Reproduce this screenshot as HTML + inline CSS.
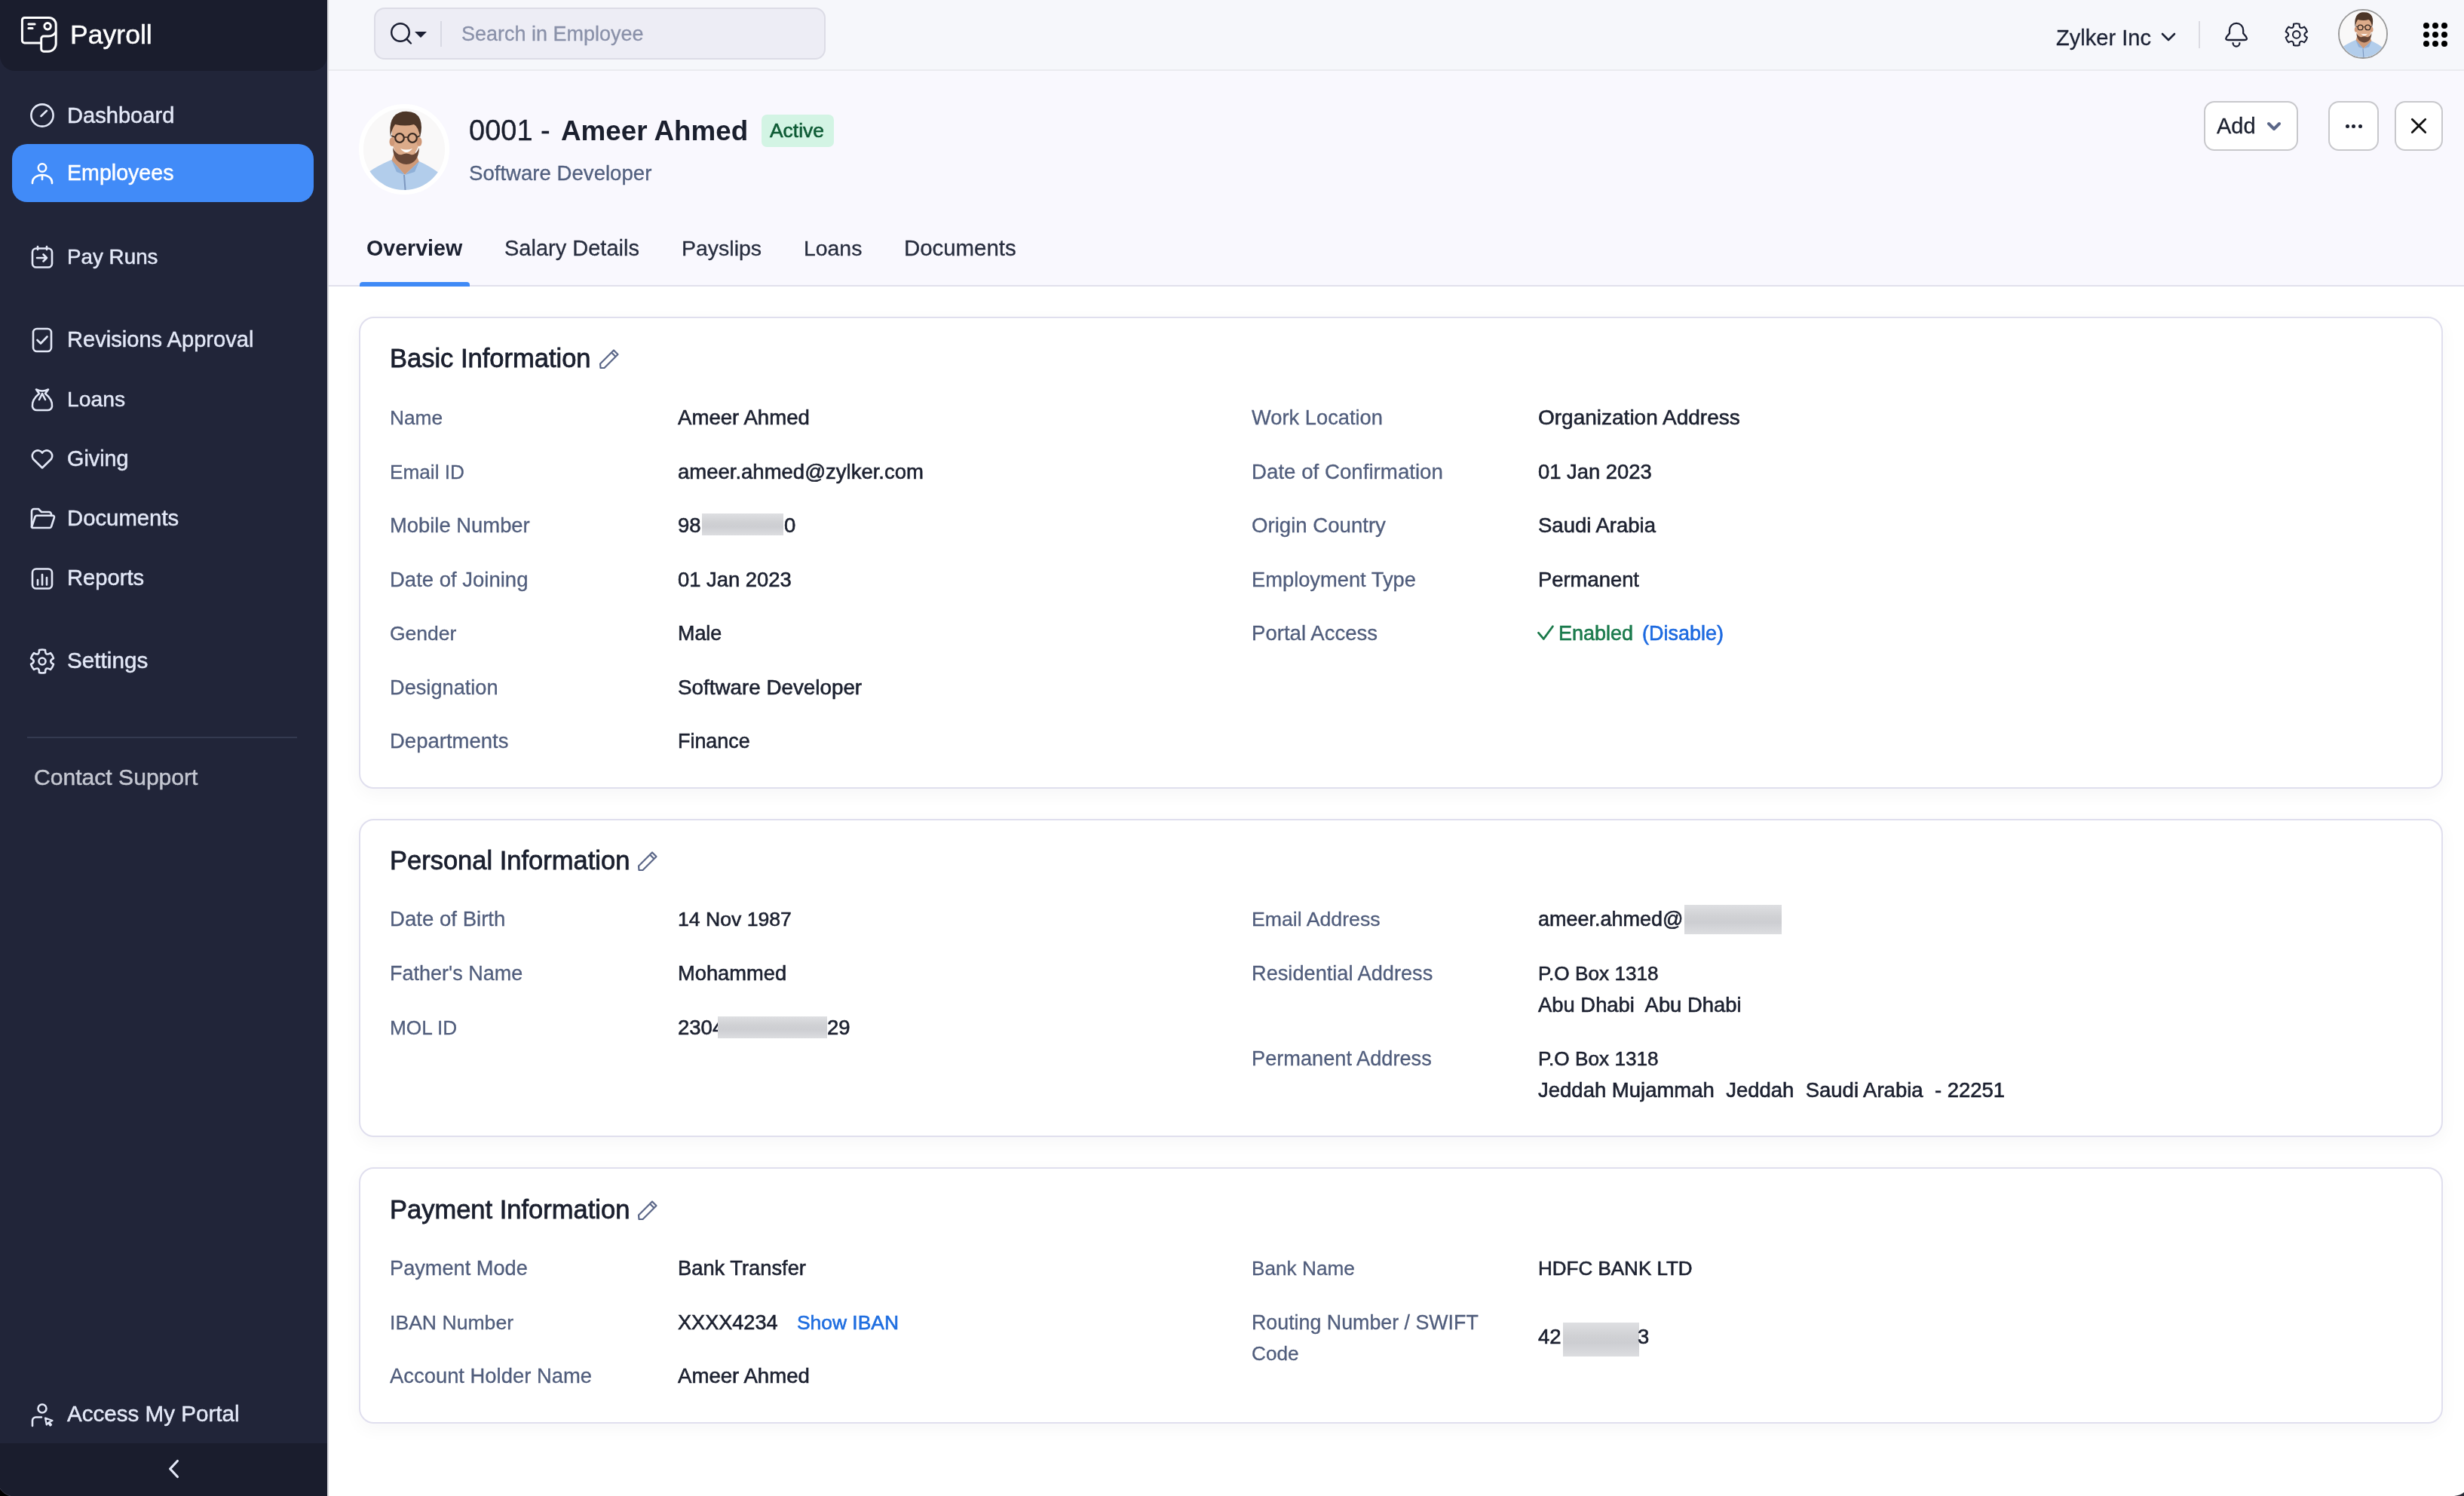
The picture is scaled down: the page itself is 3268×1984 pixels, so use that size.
<!DOCTYPE html>
<html><head><meta charset="utf-8"><title>Payroll - Employee</title>
<style>
html,body{margin:0;padding:0;width:3268px;height:1984px;overflow:hidden;background:#fff;font-family:"Liberation Sans",sans-serif}
.t{position:absolute;white-space:nowrap;line-height:1;will-change:transform}
svg{overflow:visible}
</style></head><body>
<div style="position:absolute;left:0px;top:0px;width:434px;height:1984px;background:#212539"></div>
<div style="position:absolute;left:0px;top:0px;width:434px;height:94px;background:#1a1d2d;border-radius:0 0 20px 20px"></div>
<div style="position:absolute;left:434px;top:0px;width:2px;height:1984px;background:#d9d9de"></div>
<svg style="position:absolute;left:24px;top:18px" width="56" height="56" viewBox="0 0 56 56" fill="none" stroke="#fff" stroke-width="3" stroke-linecap="round" stroke-linejoin="round">
<path d="M30.7 39 H8.6 a3.2 3.2 0 0 1 -3.2 -3.2 V8.6 a3.2 3.2 0 0 1 3.2 -3.2 H41 a9.2 9.2 0 0 1 9.2 9.2 V40 a10.2 10.2 0 0 1 -10.2 10.2 H33.9 a3.2 3.2 0 0 1 -3.2 -3.2 V33.2 a3.2 3.2 0 0 1 3.2 -3.2 H40 a10.2 8 0 0 0 10.2 -6.5"/>
<circle cx="39.1" cy="16.7" r="4.2"/>
<path d="M13.9 13.9 H22.1 M13.9 19.5 H19.1"/>
</svg>
<div class="t" style="left:93px;top:29px;font-size:35.6px;color:#ffffff;font-weight:400;-webkit-text-stroke:0.45px currentColor">Payroll</div>
<div style="position:absolute;left:16px;top:191px;width:400px;height:77px;background:#418bf8;border-radius:20px"></div>
<div class="t" style="left:89px;top:139px;font-size:29.1px;color:#e3e8f7;font-weight:400;-webkit-text-stroke:0.45px currentColor">Dashboard</div>
<div class="t" style="left:89px;top:215px;font-size:28.6px;color:#ffffff;font-weight:400;-webkit-text-stroke:0.45px currentColor">Employees</div>
<div class="t" style="left:89px;top:327px;font-size:27.8px;color:#e3e8f7;font-weight:400;-webkit-text-stroke:0.45px currentColor">Pay Runs</div>
<div class="t" style="left:89px;top:436px;font-size:29.1px;color:#e3e8f7;font-weight:400;-webkit-text-stroke:0.45px currentColor">Revisions Approval</div>
<div class="t" style="left:89px;top:515px;font-size:28.3px;color:#e3e8f7;font-weight:400;-webkit-text-stroke:0.45px currentColor">Loans</div>
<div class="t" style="left:89px;top:594px;font-size:28.8px;color:#e3e8f7;font-weight:400;-webkit-text-stroke:0.45px currentColor">Giving</div>
<div class="t" style="left:89px;top:672px;font-size:29.3px;color:#e3e8f7;font-weight:400;-webkit-text-stroke:0.45px currentColor">Documents</div>
<div class="t" style="left:89px;top:752px;font-size:29.2px;color:#e3e8f7;font-weight:400;-webkit-text-stroke:0.45px currentColor">Reports</div>
<div class="t" style="left:89px;top:861px;font-size:29.7px;color:#e3e8f7;font-weight:400;-webkit-text-stroke:0.45px currentColor">Settings</div>
<svg style="position:absolute;left:38px;top:135px" width="36" height="36" viewBox="0 0 36 36" fill="none" stroke="#e3e8f7" stroke-width="2.6" stroke-linecap="round" stroke-linejoin="round"><circle cx="18" cy="18" r="14.6"/><path d="M16.5 19 L24 11.8"/></svg>
<svg style="position:absolute;left:38px;top:212px" width="36" height="36" viewBox="0 0 36 36" fill="none" stroke="#ffffff" stroke-width="2.6" stroke-linecap="round" stroke-linejoin="round"><circle cx="18" cy="10.5" r="5.2"/><path d="M5 31 V29.5 a13 9.5 0 0 1 26 0 V31"/><path d="M18 20.5 V26"/></svg>
<svg style="position:absolute;left:38px;top:323px" width="36" height="36" viewBox="0 0 36 36" fill="none" stroke="#e3e8f7" stroke-width="2.6" stroke-linecap="round" stroke-linejoin="round"><rect x="5" y="6.5" width="26" height="25" rx="5"/><path d="M12 4 V8 M24 4 V8"/><path d="M11 19 H24 M19.5 14.5 L24 19 L19.5 23.5"/></svg>
<svg style="position:absolute;left:38px;top:433px" width="36" height="36" viewBox="0 0 36 36" fill="none" stroke="#e3e8f7" stroke-width="2.6" stroke-linecap="round" stroke-linejoin="round"><rect x="6" y="3" width="24" height="30" rx="5"/><path d="M11.5 18 L16 22.5 L24.5 13.5"/></svg>
<svg style="position:absolute;left:38px;top:510.5px" width="36" height="36" viewBox="0 0 36 36" fill="none" stroke="#e3e8f7" stroke-width="2.6" stroke-linecap="round" stroke-linejoin="round"><path d="M10 5.5 Q18 9.5 26 5.5 L22 11 Q32 19 31 28 Q30 33 25 33 H11 Q6 33 5 28 Q4 19 14 11 Z"/><path d="M18 11 L14 19 M18 11 L22 19"/></svg>
<svg style="position:absolute;left:38px;top:594px" width="36" height="36" viewBox="0 0 36 36" fill="none" stroke="#e3e8f7" stroke-width="2.6" stroke-linecap="round" stroke-linejoin="round"><path d="M18 26.5 L6 14.8 A6.6 6.6 0 0 1 18 6.6 A6.6 6.6 0 0 1 30 14.8 Z"/></svg>
<svg style="position:absolute;left:38px;top:670px" width="36" height="36" viewBox="0 0 36 36" fill="none" stroke="#e3e8f7" stroke-width="2.6" stroke-linecap="round" stroke-linejoin="round"><path d="M4 29 V8 a3 3 0 0 1 3 -3 H13 L17 9 H27 a3 3 0 0 1 3 3 V14"/><path d="M4 29 L8.5 15.5 a2.5 2.5 0 0 1 2.4 -1.8 H32 a2 2 0 0 1 1.9 2.6 L30 28.5 a2 2 0 0 1 -1.9 1.5 H5 Z"/></svg>
<svg style="position:absolute;left:38px;top:749px" width="36" height="36" viewBox="0 0 36 36" fill="none" stroke="#e3e8f7" stroke-width="2.6" stroke-linecap="round" stroke-linejoin="round"><rect x="5" y="5.5" width="26" height="26" rx="5"/><path d="M12 26.5 V20 M18 26.5 V13 M24 26.5 V17"/></svg>
<svg style="position:absolute;left:38px;top:859px" width="36" height="36" viewBox="0 0 36 36" fill="none" stroke="#e3e8f7" stroke-width="2.6" stroke-linecap="round" stroke-linejoin="round"><path d="M22.01 3.03 A15.5 15.5 0 0 0 13.99 3.03 Q14.25 11.50 7.04 7.04 A15.5 15.5 0 0 0 3.03 13.99 Q10.50 18.00 3.03 22.01 A15.5 15.5 0 0 0 7.04 28.96 Q14.25 24.50 13.99 32.97 A15.5 15.5 0 0 0 22.01 32.97 Q21.75 24.50 28.96 28.96 A15.5 15.5 0 0 0 32.97 22.01 Q25.50 18.00 32.97 13.99 A15.5 15.5 0 0 0 28.96 7.04 Q21.75 11.50 22.01 3.03 Z"/><circle cx="18" cy="18" r="4.5"/></svg>
<div style="position:absolute;left:36px;top:977px;width:358px;height:2px;background:#343a50"></div>
<div class="t" style="left:45px;top:1016px;font-size:30.1px;color:#c4c7d1;font-weight:400;-webkit-text-stroke:0.45px currentColor">Contact Support</div>
<svg style="position:absolute;left:38px;top:1858px" width="36" height="36" viewBox="0 0 36 36" fill="none" stroke="#e3e8f7" stroke-width="2.6" stroke-linecap="round" stroke-linejoin="round"><circle cx="18" cy="10" r="5.5"/><path d="M5 33 V26 a4.5 4.5 0 0 1 4.5 -4.5 H17"/><path d="M22 22.5 L31.5 26 L27.5 27.8 L30 31.5 L28.5 32.5 L26 28.8 L23.8 31.5 Z" stroke-width="2.2"/></svg>
<div class="t" style="left:89px;top:1860px;font-size:29.6px;color:#e3e8f7;font-weight:400;-webkit-text-stroke:0.45px currentColor">Access My Portal</div>
<div style="position:absolute;left:0px;top:1914px;width:434px;height:70px;background:#1a1d2d"></div>
<svg style="position:absolute;left:216px;top:1932px" width="28" height="34" viewBox="0 -2 28 30" fill="none" stroke="#e3e8f7" stroke-width="2.6" stroke-linecap="round" stroke-linejoin="round"><path d="M19.4 1.5 L9.6 12 L19.4 22.5" stroke-width="3.2"/></svg>
<div style="position:absolute;left:436px;top:0px;width:2832px;height:92px;background:#f6f7fb"></div>
<div style="position:absolute;left:436px;top:92px;width:2832px;height:2px;background:#ebebf0"></div>
<div style="position:absolute;left:496px;top:10px;width:599px;height:69px;background:#ededf5;border:2px solid #dcdce6;border-radius:14px;box-sizing:border-box"></div>
<svg style="position:absolute;left:512px;top:24px" width="60" height="40" viewBox="0 0 60 40"><circle cx="19" cy="19" r="11.8" fill="none" stroke="#1b1f33" stroke-width="2.4"/><path d="M27.8 28.2 L33 33.5" stroke="#1b1f33" stroke-width="2.4" stroke-linecap="round"/><path d="M38 18 H54 L46 26 Z" fill="#1b1f33"/></svg>
<div style="position:absolute;left:584px;top:28px;width:2px;height:34px;background:#d8d9e3"></div>
<div class="t" style="left:612px;top:32px;font-size:27px;color:#8a91a9;font-weight:400;-webkit-text-stroke:0.3px currentColor">Search in Employee</div>
<div class="t" style="left:2727px;top:36px;font-size:29.1px;color:#1c2235;font-weight:400;-webkit-text-stroke:0.3px currentColor">Zylker Inc</div>
<svg style="position:absolute;left:2864px;top:40px" width="24" height="18" viewBox="0 0 24 18"><path d="M4 5 L12 13 L20 5" fill="none" stroke="#1c2235" stroke-width="2.6" stroke-linecap="round" stroke-linejoin="round"/></svg>
<div style="position:absolute;left:2916px;top:28px;width:2px;height:36px;background:#dcdce3"></div>
<svg style="position:absolute;left:2940px;top:20px" width="60" height="50" viewBox="0 0 60 50" fill="none" stroke="#1b1f33" stroke-width="2.3" stroke-linecap="round" stroke-linejoin="round"><path d="M17 24.3 V19.9 A9.1 9.1 0 0 1 35.2 19.9 V24.3 L39 28.8 Q41.5 33 37 33 H15.2 Q10.7 33 13.2 28.8 Z"/><path d="M21.6 37.2 A4.4 4.4 0 0 0 30.4 37.2"/></svg>
<svg style="position:absolute;left:3028px;top:28px" width="36" height="36" viewBox="0 0 36 36" fill="none" stroke="#1b1f33" stroke-width="2.1" stroke-linejoin="round"><path d="M21.58 3.80 A14.6 14.6 0 0 0 14.02 3.80 Q14.30 11.84 7.48 7.58 A14.6 14.6 0 0 0 3.70 14.12 Q10.80 17.90 3.70 21.68 A14.6 14.6 0 0 0 7.48 28.22 Q14.30 23.96 14.02 32.00 A14.6 14.6 0 0 0 21.58 32.00 Q21.30 23.96 28.12 28.22 A14.6 14.6 0 0 0 31.90 21.68 Q24.80 17.90 31.90 14.12 A14.6 14.6 0 0 0 28.12 7.58 Q21.30 11.84 21.58 3.80 Z"/><circle cx="17.8" cy="17.9" r="4.8"/></svg>
<svg style="position:absolute;left:3101px;top:12px" width="66" height="66" viewBox="-57.483870967741936 -57.483870967741936 114.96774193548387 114.96774193548387">
<defs><clipPath id="clipA"><circle cx="0" cy="0" r="54"/></clipPath></defs>
<circle cx="0" cy="0" r="55.74193548387097" fill="#fbfbfb" stroke="#9a9a9a" stroke-width="3.4838709677419355"/>
<g clip-path="url(#clipA)">
<rect x="-54" y="-54" width="108" height="108" fill="#f9f8f8"/>
<path d="M-13 4 L-17 16 L1 34 L20 17 L15 4 Z" fill="#cf9a78"/>
<path d="M-58 60 L-52 34 Q-40 24 -17 14 L1 34 L20 16 Q38 24 52 36 L58 60 Z" fill="#b2cdeb"/>
<path d="M-17 14 L-10 30 L1 34 Z M20 16 L14 30 L1 34 Z" fill="#8fb0d8"/>
<path d="M0 34 L2 60" stroke="#7d98c0" stroke-width="2"/>
<rect x="-16" y="-36" width="36" height="24" fill="#dcab8a"/><ellipse cx="2" cy="-13" rx="18" ry="24" fill="#dcab8a"/>
<ellipse cx="-16" cy="-10" rx="3.5" ry="6" fill="#cf9877"/>
<ellipse cx="20" cy="-10" rx="3.5" ry="6" fill="#cf9877"/>
<path d="M-18 -16 Q-22 -46 -2 -50 Q16 -52 21 -40 Q25 -30 21 -16 Q19 -30 13 -33 Q2 -30 -12 -33 Q-17 -26 -18 -16 Z" fill="#4d3628"/>
<path d="M-15 -2 Q-14 19 3 20 Q19 19 20 -2 Q15 9 9 7 Q3 4 -3 7 Q-9 9 -15 -2 Z" fill="#674636"/>
<path d="M-5 -1 Q3 9 11 -1 Q3 2 -5 -1 Z" fill="#ffffff"/>
<circle cx="-6" cy="-15" r="5.8" fill="none" stroke="#3a2a22" stroke-width="2.2"/>
<circle cx="11" cy="-15" r="5.8" fill="none" stroke="#3a2a22" stroke-width="2.2"/>
<path d="M-0.2 -16 H5.2 M-11.8 -16 L-17 -18 M16.8 -16 L21 -18" stroke="#3a2a22" stroke-width="1.6"/>
</g></svg>
<div style="position:absolute;left:3214.2px;top:30.2px;width:8.2px;height:8.2px;background:#000;border-radius:50%"></div>
<div style="position:absolute;left:3226.2px;top:30.2px;width:8.2px;height:8.2px;background:#000;border-radius:50%"></div>
<div style="position:absolute;left:3238.2px;top:30.2px;width:8.2px;height:8.2px;background:#000;border-radius:50%"></div>
<div style="position:absolute;left:3214.2px;top:42.2px;width:8.2px;height:8.2px;background:#000;border-radius:50%"></div>
<div style="position:absolute;left:3226.2px;top:42.2px;width:8.2px;height:8.2px;background:#000;border-radius:50%"></div>
<div style="position:absolute;left:3238.2px;top:42.2px;width:8.2px;height:8.2px;background:#000;border-radius:50%"></div>
<div style="position:absolute;left:3214.2px;top:54.2px;width:8.2px;height:8.2px;background:#000;border-radius:50%"></div>
<div style="position:absolute;left:3226.2px;top:54.2px;width:8.2px;height:8.2px;background:#000;border-radius:50%"></div>
<div style="position:absolute;left:3238.2px;top:54.2px;width:8.2px;height:8.2px;background:#000;border-radius:50%"></div>
<div style="position:absolute;left:436px;top:94px;width:2832px;height:284px;background:#f9f8fe"></div>
<div style="position:absolute;left:436px;top:378px;width:2832px;height:2px;background:#e1e0ec"></div>
<svg style="position:absolute;left:476px;top:138px" width="120" height="120" viewBox="-60.0 -60.0 120.0 120.0">
<defs><clipPath id="clipB"><circle cx="0" cy="0" r="54"/></clipPath></defs>
<circle cx="0" cy="0" r="57.0" fill="#fbfbfb" stroke="#ffffff" stroke-width="6.0"/>
<g clip-path="url(#clipB)">
<rect x="-54" y="-54" width="108" height="108" fill="#f9f8f8"/>
<path d="M-13 4 L-17 16 L1 34 L20 17 L15 4 Z" fill="#cf9a78"/>
<path d="M-58 60 L-52 34 Q-40 24 -17 14 L1 34 L20 16 Q38 24 52 36 L58 60 Z" fill="#b2cdeb"/>
<path d="M-17 14 L-10 30 L1 34 Z M20 16 L14 30 L1 34 Z" fill="#8fb0d8"/>
<path d="M0 34 L2 60" stroke="#7d98c0" stroke-width="2"/>
<rect x="-16" y="-36" width="36" height="24" fill="#dcab8a"/><ellipse cx="2" cy="-13" rx="18" ry="24" fill="#dcab8a"/>
<ellipse cx="-16" cy="-10" rx="3.5" ry="6" fill="#cf9877"/>
<ellipse cx="20" cy="-10" rx="3.5" ry="6" fill="#cf9877"/>
<path d="M-18 -16 Q-22 -46 -2 -50 Q16 -52 21 -40 Q25 -30 21 -16 Q19 -30 13 -33 Q2 -30 -12 -33 Q-17 -26 -18 -16 Z" fill="#4d3628"/>
<path d="M-15 -2 Q-14 19 3 20 Q19 19 20 -2 Q15 9 9 7 Q3 4 -3 7 Q-9 9 -15 -2 Z" fill="#674636"/>
<path d="M-5 -1 Q3 9 11 -1 Q3 2 -5 -1 Z" fill="#ffffff"/>
<circle cx="-6" cy="-15" r="5.8" fill="none" stroke="#3a2a22" stroke-width="2.2"/>
<circle cx="11" cy="-15" r="5.8" fill="none" stroke="#3a2a22" stroke-width="2.2"/>
<path d="M-0.2 -16 H5.2 M-11.8 -16 L-17 -18 M16.8 -16 L21 -18" stroke="#3a2a22" stroke-width="1.6"/>
</g></svg>
<div class="t" style="left:622px;top:154px;font-size:38px;color:#1a1f2e;font-weight:400;-webkit-text-stroke:0.3px currentColor">0001 -&nbsp;</div>
<div class="t" style="left:744px;top:156px;font-size:36.8px;color:#1a1f2e;font-weight:700;">Ameer Ahmed</div>
<div style="position:absolute;left:1010px;top:152px;width:96px;height:43px;background:#d3f4e4;border-radius:7px"></div>
<div class="t" style="left:1021px;top:160px;font-size:26.4px;color:#0e5b35;font-weight:400;-webkit-text-stroke:0.6px currentColor">Active</div>
<div class="t" style="left:622px;top:216px;font-size:27.6px;color:#52607f;font-weight:400;-webkit-text-stroke:0.3px currentColor">Software Developer</div>
<div class="t" style="left:486px;top:315px;font-size:28.6px;color:#1b2030;font-weight:700;">Overview</div>
<div class="t" style="left:669px;top:315px;font-size:29px;color:#272d3e;font-weight:400;-webkit-text-stroke:0.3px currentColor">Salary Details</div>
<div class="t" style="left:903.5px;top:315px;font-size:28.5px;color:#272d3e;font-weight:400;-webkit-text-stroke:0.3px currentColor">Payslips</div>
<div class="t" style="left:1066px;top:315px;font-size:28.4px;color:#272d3e;font-weight:400;-webkit-text-stroke:0.3px currentColor">Loans</div>
<div class="t" style="left:1199px;top:314px;font-size:29.4px;color:#272d3e;font-weight:400;-webkit-text-stroke:0.3px currentColor">Documents</div>
<div style="position:absolute;left:477px;top:374px;width:146px;height:6px;background:#3f8af6;border-radius:4px 4px 0 0"></div>
<div style="position:absolute;left:2923px;top:134px;width:125px;height:66px;background:#fff;border:2px solid #c8c8cc;border-radius:14px;box-sizing:border-box"></div>
<div class="t" style="left:2940px;top:153px;font-size:29px;color:#1a1f2e;font-weight:400;-webkit-text-stroke:0.3px currentColor">Add</div>
<svg style="position:absolute;left:3004px;top:158px" width="24" height="20" viewBox="0 0 24 20"><path d="M5 6 L12 13 L19 6" fill="none" stroke="#5b6788" stroke-width="4" stroke-linecap="round" stroke-linejoin="round"/></svg>
<div style="position:absolute;left:3088px;top:134px;width:67px;height:66px;background:#fff;border:2px solid #c8c8cc;border-radius:14px;box-sizing:border-box"></div>
<div style="position:absolute;left:3110.8px;top:164.5px;width:5px;height:5px;background:#1b1f2e;border-radius:50%"></div>
<div style="position:absolute;left:3119.4500000000003px;top:164.5px;width:5px;height:5px;background:#1b1f2e;border-radius:50%"></div>
<div style="position:absolute;left:3128.1000000000004px;top:164.5px;width:5px;height:5px;background:#1b1f2e;border-radius:50%"></div>
<div style="position:absolute;left:3176px;top:134px;width:64px;height:66px;background:#fff;border:2px solid #c8c8cc;border-radius:14px;box-sizing:border-box"></div>
<svg style="position:absolute;left:3192px;top:151px" width="32" height="32" viewBox="0 0 32 32"><path d="M7.3 7.3 L24.7 24.5 M24.7 7.3 L7.3 24.5" stroke="#111" stroke-width="2.8" stroke-linecap="round"/></svg>
<div style="position:absolute;left:476px;top:420px;width:2764px;height:626px;background:#fff;border:2px solid #e0dfee;border-radius:20px;box-sizing:border-box;box-shadow:0 7px 24px rgba(30,30,60,0.04)"></div>
<div style="position:absolute;left:476px;top:1086px;width:2764px;height:422px;background:#fff;border:2px solid #e0dfee;border-radius:20px;box-sizing:border-box;box-shadow:0 7px 24px rgba(30,30,60,0.04)"></div>
<div style="position:absolute;left:476px;top:1548px;width:2764px;height:340px;background:#fff;border:2px solid #e0dfee;border-radius:20px;box-sizing:border-box;box-shadow:0 7px 24px rgba(30,30,60,0.04)"></div>
<div class="t" style="left:517px;top:458px;font-size:34.5px;color:#1a1f2e;font-weight:400;-webkit-text-stroke:0.8px currentColor">Basic Information</div>
<svg style="position:absolute;left:792px;top:458px" width="32" height="32" viewBox="0 0 32 32" fill="none" stroke="#5b6788" stroke-width="2.2" stroke-linejoin="round"><path d="M4.5 30 L4 24.5 L22 6.5 L27.5 12 L9.5 30 Z M19 9.5 L24.5 15"/></svg>
<div class="t" style="left:517px;top:541px;font-size:26.3px;color:#505d7c;font-weight:400;-webkit-text-stroke:0.3px currentColor">Name</div>
<div class="t" style="left:899px;top:540px;font-size:27.6px;color:#1c2130;font-weight:400;-webkit-text-stroke:0.6px currentColor">Ameer Ahmed</div>
<div class="t" style="left:517px;top:613px;font-size:26.2px;color:#505d7c;font-weight:400;-webkit-text-stroke:0.3px currentColor">Email ID</div>
<div class="t" style="left:899px;top:612px;font-size:27.5px;color:#1c2130;font-weight:400;-webkit-text-stroke:0.6px currentColor">ameer.ahmed@zylker.com</div>
<div class="t" style="left:517px;top:683px;font-size:27.4px;color:#505d7c;font-weight:400;-webkit-text-stroke:0.3px currentColor">Mobile Number</div>
<div class="t" style="left:899px;top:683px;font-size:27.5px;color:#1c2130;font-weight:400;-webkit-text-stroke:0.6px currentColor">98</div>
<div class="t" style="left:517px;top:755px;font-size:27.5px;color:#505d7c;font-weight:400;-webkit-text-stroke:0.3px currentColor">Date of Joining</div>
<div class="t" style="left:899px;top:755px;font-size:27.4px;color:#1c2130;font-weight:400;-webkit-text-stroke:0.6px currentColor">01 Jan 2023</div>
<div class="t" style="left:517px;top:827px;font-size:26.5px;color:#505d7c;font-weight:400;-webkit-text-stroke:0.3px currentColor">Gender</div>
<div class="t" style="left:899px;top:827px;font-size:26.9px;color:#1c2130;font-weight:400;-webkit-text-stroke:0.6px currentColor">Male</div>
<div class="t" style="left:517px;top:898px;font-size:27.2px;color:#505d7c;font-weight:400;-webkit-text-stroke:0.3px currentColor">Designation</div>
<div class="t" style="left:899px;top:898px;font-size:27.8px;color:#1c2130;font-weight:400;-webkit-text-stroke:0.6px currentColor">Software Developer</div>
<div class="t" style="left:517px;top:969px;font-size:27.5px;color:#505d7c;font-weight:400;-webkit-text-stroke:0.3px currentColor">Departments</div>
<div class="t" style="left:899px;top:970px;font-size:26.9px;color:#1c2130;font-weight:400;-webkit-text-stroke:0.6px currentColor">Finance</div>
<div style="position:absolute;left:931px;top:681px;width:108px;height:29px;background:linear-gradient(180deg,#dedfe2 0%,#d0d1d4 40%,#cdced2 60%,#dcdde0 100%);filter:blur(0.7px)"></div>
<div class="t" style="left:1040px;top:683px;font-size:27.5px;color:#1c2130;font-weight:400;-webkit-text-stroke:0.6px currentColor">0</div>
<div class="t" style="left:1660px;top:540px;font-size:27.3px;color:#505d7c;font-weight:400;-webkit-text-stroke:0.3px currentColor">Work Location</div>
<div class="t" style="left:2040px;top:540px;font-size:28.0px;color:#1c2130;font-weight:400;-webkit-text-stroke:0.6px currentColor">Organization Address</div>
<div class="t" style="left:1660px;top:612px;font-size:27.7px;color:#505d7c;font-weight:400;-webkit-text-stroke:0.3px currentColor">Date of Confirmation</div>
<div class="t" style="left:2040px;top:612px;font-size:27.4px;color:#1c2130;font-weight:400;-webkit-text-stroke:0.6px currentColor">01 Jan 2023</div>
<div class="t" style="left:1660px;top:683px;font-size:27.6px;color:#505d7c;font-weight:400;-webkit-text-stroke:0.3px currentColor">Origin Country</div>
<div class="t" style="left:2040px;top:683px;font-size:27.5px;color:#1c2130;font-weight:400;-webkit-text-stroke:0.6px currentColor">Saudi Arabia</div>
<div class="t" style="left:1660px;top:755px;font-size:27.3px;color:#505d7c;font-weight:400;-webkit-text-stroke:0.3px currentColor">Employment Type</div>
<div class="t" style="left:2040px;top:755px;font-size:27.4px;color:#1c2130;font-weight:400;-webkit-text-stroke:0.6px currentColor">Permanent</div>
<div class="t" style="left:1660px;top:826px;font-size:27.6px;color:#505d7c;font-weight:400;-webkit-text-stroke:0.3px currentColor">Portal Access</div>
<svg style="position:absolute;left:2038px;top:829px" width="26" height="22" viewBox="0 0 26 22"><path d="M2.4 10.2 L9.3 18.4 L21.4 1.7" fill="none" stroke="#1c7a4b" stroke-width="2.8" stroke-linecap="round" stroke-linejoin="round"/></svg>
<div class="t" style="left:2067px;top:827px;font-size:27px;color:#1a7a4c;font-weight:400;-webkit-text-stroke:0.6px currentColor">Enabled</div>
<div class="t" style="left:2178px;top:827px;font-size:27px;color:#1d6ae0;font-weight:400;-webkit-text-stroke:0.6px currentColor">(Disable)</div>
<div class="t" style="left:517px;top:1124px;font-size:34.5px;color:#1a1f2e;font-weight:400;-webkit-text-stroke:0.8px currentColor">Personal Information</div>
<svg style="position:absolute;left:843px;top:1124px" width="32" height="32" viewBox="0 0 32 32" fill="none" stroke="#5b6788" stroke-width="2.2" stroke-linejoin="round"><path d="M4.5 30 L4 24.5 L22 6.5 L27.5 12 L9.5 30 Z M19 9.5 L24.5 15"/></svg>
<div class="t" style="left:517px;top:1205px;font-size:27.6px;color:#505d7c;font-weight:400;-webkit-text-stroke:0.3px currentColor">Date of Birth</div>
<div class="t" style="left:899px;top:1206px;font-size:26.6px;color:#1c2130;font-weight:400;-webkit-text-stroke:0.6px currentColor">14 Nov 1987</div>
<div class="t" style="left:517px;top:1278px;font-size:27.0px;color:#505d7c;font-weight:400;-webkit-text-stroke:0.3px currentColor">Father's Name</div>
<div class="t" style="left:899px;top:1277px;font-size:27.3px;color:#1c2130;font-weight:400;-webkit-text-stroke:0.6px currentColor">Mohammed</div>
<div class="t" style="left:517px;top:1350px;font-size:26.2px;color:#505d7c;font-weight:400;-webkit-text-stroke:0.3px currentColor">MOL ID</div>
<div class="t" style="left:899px;top:1349px;font-size:27.5px;color:#1c2130;font-weight:400;-webkit-text-stroke:0.6px currentColor">2304</div>
<div style="position:absolute;left:952px;top:1348px;width:145px;height:29px;background:linear-gradient(180deg,#dedfe2 0%,#d0d1d4 40%,#cdced2 60%,#dcdde0 100%);filter:blur(0.7px)"></div>
<div class="t" style="left:1097px;top:1349px;font-size:27.5px;color:#1c2130;font-weight:400;-webkit-text-stroke:0.6px currentColor">29</div>
<div class="t" style="left:1660px;top:1206px;font-size:26.7px;color:#505d7c;font-weight:400;-webkit-text-stroke:0.3px currentColor">Email Address</div>
<div class="t" style="left:2040px;top:1206px;font-size:27.0px;color:#1c2130;font-weight:400;-webkit-text-stroke:0.6px currentColor">ameer.ahmed@</div>
<div style="position:absolute;left:2234px;top:1200px;width:129px;height:39px;background:linear-gradient(180deg,#dedfe2 0%,#d0d1d4 40%,#cdced2 60%,#dcdde0 100%);filter:blur(0.7px)"></div>
<div class="t" style="left:1660px;top:1277px;font-size:27.2px;color:#505d7c;font-weight:400;-webkit-text-stroke:0.3px currentColor">Residential Address</div>
<div class="t" style="left:2040px;top:1278px;font-size:26.2px;color:#1c2130;font-weight:400;-webkit-text-stroke:0.6px currentColor">P.O Box 1318</div>
<div class="t" style="left:2040px;top:1319px;font-size:27.4px;color:#1c2130;font-weight:400;-webkit-text-stroke:0.6px currentColor">Abu Dhabi&nbsp; Abu Dhabi</div>
<div class="t" style="left:1660px;top:1390px;font-size:27.2px;color:#505d7c;font-weight:400;-webkit-text-stroke:0.3px currentColor">Permanent Address</div>
<div class="t" style="left:2040px;top:1391px;font-size:26.2px;color:#1c2130;font-weight:400;-webkit-text-stroke:0.6px currentColor">P.O Box 1318</div>
<div class="t" style="left:2040px;top:1432px;font-size:27.5px;color:#1c2130;font-weight:400;-webkit-text-stroke:0.6px currentColor">Jeddah Mujammah&nbsp; Jeddah&nbsp; Saudi Arabia&nbsp; - 22251</div>
<div class="t" style="left:517px;top:1587px;font-size:34.5px;color:#1a1f2e;font-weight:400;-webkit-text-stroke:0.8px currentColor">Payment Information</div>
<svg style="position:absolute;left:843px;top:1587px" width="32" height="32" viewBox="0 0 32 32" fill="none" stroke="#5b6788" stroke-width="2.2" stroke-linejoin="round"><path d="M4.5 30 L4 24.5 L22 6.5 L27.5 12 L9.5 30 Z M19 9.5 L24.5 15"/></svg>
<div class="t" style="left:517px;top:1668px;font-size:27.2px;color:#505d7c;font-weight:400;-webkit-text-stroke:0.3px currentColor">Payment Mode</div>
<div class="t" style="left:899px;top:1668px;font-size:27.3px;color:#1c2130;font-weight:400;-webkit-text-stroke:0.6px currentColor">Bank Transfer</div>
<div class="t" style="left:517px;top:1741px;font-size:26.6px;color:#505d7c;font-weight:400;-webkit-text-stroke:0.3px currentColor">IBAN Number</div>
<div class="t" style="left:899px;top:1740px;font-size:27.1px;color:#1c2130;font-weight:400;-webkit-text-stroke:0.6px currentColor">XXXX4234</div>
<div class="t" style="left:1057px;top:1741px;font-size:26.4px;color:#1f6ee0;font-weight:400;-webkit-text-stroke:0.6px currentColor">Show IBAN</div>
<div class="t" style="left:517px;top:1811px;font-size:27.4px;color:#505d7c;font-weight:400;-webkit-text-stroke:0.3px currentColor">Account Holder Name</div>
<div class="t" style="left:899px;top:1811px;font-size:27.6px;color:#1c2130;font-weight:400;-webkit-text-stroke:0.6px currentColor">Ameer Ahmed</div>
<div class="t" style="left:1660px;top:1669px;font-size:26.2px;color:#505d7c;font-weight:400;-webkit-text-stroke:0.3px currentColor">Bank Name</div>
<div class="t" style="left:2040px;top:1669px;font-size:26px;color:#1c2130;font-weight:400;-webkit-text-stroke:0.6px currentColor">HDFC BANK LTD</div>
<div class="t" style="left:1660px;top:1741px;font-size:26.8px;color:#505d7c;font-weight:400;-webkit-text-stroke:0.3px currentColor">Routing Number / SWIFT</div>
<div class="t" style="left:1660px;top:1782px;font-size:26.2px;color:#505d7c;font-weight:400;-webkit-text-stroke:0.3px currentColor">Code</div>
<div class="t" style="left:2040px;top:1759px;font-size:27.5px;color:#1c2130;font-weight:400;-webkit-text-stroke:0.6px currentColor">42</div>
<div style="position:absolute;left:2073px;top:1754px;width:101px;height:45px;background:linear-gradient(180deg,#dedfe2 0%,#d0d1d4 40%,#cdced2 60%,#dcdde0 100%);filter:blur(0.7px)"></div>
<div class="t" style="left:2172px;top:1759px;font-size:27.5px;color:#1c2130;font-weight:400;-webkit-text-stroke:0.6px currentColor">3</div>
<svg style="position:absolute;left:0;top:1964px" width="20" height="20" viewBox="0 0 20 20"><path d="M0 10 Q5 17.5 14 20 H0 Z" fill="#000"/><path d="M0 10 Q5 17.5 14 20" fill="none" stroke="#3b3f52" stroke-width="1"/></svg>
<svg style="position:absolute;left:3248px;top:1964px" width="20" height="20" viewBox="0 0 20 20"><path d="M20 15 Q16 19 7 20 H20 Z" fill="#2a2c38"/></svg>
</body></html>
